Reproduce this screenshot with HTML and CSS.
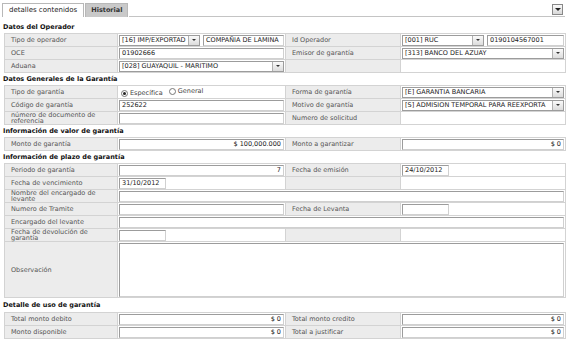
FILE: index.html
```html
<!DOCTYPE html>
<html lang="es">
<head>
  <meta charset="UTF-8" />
  <title>Garantia - detalles contenidos</title>
  <link rel="stylesheet" href="styles.css">
</head>
<body>
  <div class="page">
    <div class="tabbar">
      <a href="#" class="tab active">detalles contenidos</a>
      <a href="#" class="tab">Historial</a>
      <span class="tab-line"></span>
      <button class="collapse" type="button"><span class="arrow"></span></button>
    </div>

    <h3 class="section first">Datos del Operador</h3>
    <table class="grid">
      <colgroup><col class="c1"><col class="c2"><col class="c3"><col class="c4"></colgroup>
      <tr>
        <th>Tipo de operador</th>
        <td>
          <div class="pair">
            <div class="combo w80"><span class="txt">[16] IMP/EXPORTAD</span><span class="btn"></span></div>
            <input class="field" value="COMPAÑIA DE LAMINA">
          </div>
        </td>
        <th>Id Operador</th>
        <td>
          <div class="pair">
            <div class="combo w81"><span class="txt">[001] RUC</span><span class="btn"></span></div>
            <input class="field" value="0190104567001">
          </div>
        </td>
      </tr>
      <tr>
        <th>OCE</th>
        <td><input class="field" value="01902666"></td>
        <th>Emisor de garantía</th>
        <td><div class="combo"><span class="txt">[313] BANCO DEL AZUAY</span><span class="btn"></span></div></td>
      </tr>
      <tr>
        <th>Aduana</th>
        <td><div class="combo"><span class="txt">[028] GUAYAQUIL - MARITIMO</span><span class="btn"></span></div></td>
        <th></th>
        <td></td>
      </tr>
    </table>

    <h3 class="section">Datos Generales de la Garantía</h3>
    <table class="grid">
      <colgroup><col class="c1"><col class="c2"><col class="c3"><col class="c4"></colgroup>
      <tr>
        <th>Tipo de garantía</th>
        <td class="radios">
          <label><input type="radio" name="tipo" checked> Específica</label>
          <label><input type="radio" name="tipo"> General</label>
        </td>
        <th>Forma de garantía</th>
        <td><div class="combo"><span class="txt">[E] GARANTIA BANCARIA</span><span class="btn"></span></div></td>
      </tr>
      <tr>
        <th>Código de garantía</th>
        <td><input class="field" value="252622"></td>
        <th>Motivo de garantía</th>
        <td><div class="combo"><span class="txt">[S] ADMISION TEMPORAL PARA REEXPORTA</span><span class="btn"></span></div></td>
      </tr>
      <tr>
        <th class="two">número de documento de referencia</th>
        <td><input class="field" value=""></td>
        <th>Numero de solicitud</th>
        <td></td>
      </tr>
    </table>

    <h3 class="section">Información de valor de garantía</h3>
    <table class="grid">
      <colgroup><col class="c1"><col class="c2"><col class="c3"><col class="c4"></colgroup>
      <tr>
        <th>Monto de garantía</th>
        <td><input class="field num" value="$ 100,000.000"></td>
        <th>Monto a garantizar</th>
        <td><input class="field num" value="$ 0"></td>
      </tr>
    </table>

    <h3 class="section">Información de plazo de garantía</h3>
    <table class="grid">
      <colgroup><col class="c1"><col class="c2"><col class="c3"><col class="c4"></colgroup>
      <tr>
        <th>Periodo de garantía</th>
        <td><input class="field num" value="7"></td>
        <th>Fecha de emisión</th>
        <td><input class="field date" value="24/10/2012"></td>
      </tr>
      <tr>
        <th>Fecha de vencimiento</th>
        <td><input class="field date" value="31/10/2012"></td>
        <th></th>
        <td></td>
      </tr>
      <tr>
        <th class="two">Nombre del encargado de levante</th>
        <td colspan="3"><input class="field" value=""></td>
      </tr>
      <tr>
        <th>Numero de Tramite</th>
        <td><input class="field" value=""></td>
        <th>Fecha de Levanta</th>
        <td><input class="field date" value=""></td>
      </tr>
      <tr>
        <th>Encargado del levante</th>
        <td colspan="3"><input class="field" value=""></td>
      </tr>
      <tr>
        <th class="two">Fecha de devolución de garantía</th>
        <td><input class="field date" value=""></td>
        <th></th>
        <td></td>
      </tr>
      <tr class="tall">
        <th>Observación</th>
        <td colspan="3"><textarea class="notes"></textarea></td>
      </tr>
    </table>

    <h3 class="section last">Detalle de uso de garantía</h3>
    <table class="grid">
      <colgroup><col class="c1"><col class="c2"><col class="c3"><col class="c4"></colgroup>
      <tr>
        <th>Total monto debito</th>
        <td><input class="field num" value="$ 0"></td>
        <th>Total monto credito</th>
        <td><input class="field num" value="$ 0"></td>
      </tr>
      <tr>
        <th>Monto disponible</th>
        <td><input class="field num" value="$ 0"></td>
        <th>Total a justificar</th>
        <td><input class="field num" value="$ 0"></td>
      </tr>
    </table>
  </div>
</body>
</html>
```

FILE: styles.css
```css
* {
  box-sizing: border-box;
}

body {
  margin: 0;
  background-color: #fff;
  font-family: "DejaVu Sans", Verdana, sans-serif;
  font-size: 6.5px;
  color: #333;
}

.page {
  width: 567px;
  padding: 0 2px 0 3px;
}

/* tabs */
.tabbar {
  display: flex;
  align-items: flex-end;
  height: 17px;
  padding-top: 3px;
  position: relative;
}

.tab {
  display: block;
  height: 14px;
  line-height: 13px;
  padding: 0 5px;
  font-size: 7px;
  text-decoration: none;
  color: #222;
  border: 1px solid #b8b8b8;
  border-bottom: none;
  margin-right: 1px;
}

.tab.active {
  background-color: #fff;
  padding: 0 6px;
  margin-left: -1px;
}

.tab:not(.active) {
  background-color: #c9c9c9;
  font-weight: bold;
  color: #333;
  font-size: 6.5px;
}

.tab-line {
  flex: 1;
  border-bottom: 1px solid #c4c4c4;
}

.collapse {
  position: absolute;
  right: 2px;
  top: 4px;
  width: 11px;
  height: 11px;
  padding: 0;
  border: 1px solid #888;
  background: linear-gradient(#fafafa, #d8d8d8);
  display: flex;
  align-items: center;
  justify-content: center;
}

.collapse .arrow {
  width: 0;
  height: 0;
  border-left: 3px solid transparent;
  border-right: 3px solid transparent;
  border-top: 3px solid #222;
}

/* section headings */
.section {
  margin: 0;
  height: 12px;
  line-height: 12px;
  font-size: 6.5px;
  font-weight: bold;
  color: #111;
}

.section.first {
  height: 16px;
  line-height: 20px;
}

.section.last {
  height: 14px;
  line-height: 14px;
}

/* form tables */
.grid {
  width: 561px;
  margin-left: 1px;
  border-collapse: collapse;
  table-layout: fixed;
}

.c1 { width: 113px; }
.c2 { width: 168px; }
.c3 { width: 115px; }
.c4 { width: 165px; }

.grid tr {
  height: 13px;
}

.grid th,
.grid td {
  border: 1px solid #d3d3d3;
  padding: 0 1px;
  height: 13px;
  vertical-align: middle;
}

.grid th {
  background-color: #ececec;
  font-weight: normal;
  text-align: left;
  padding-left: 6px;
  color: #555;
  white-space: nowrap;
}

.grid th.two {
  white-space: normal;
  line-height: 5.5px;
  padding-right: 20px;
  padding-top: 1px;
}

.grid td {
  background-color: #fff;
}

.grid tr.tall th,
.grid tr.tall td {
  height: 56px;
}

/* inputs */
.field {
  display: block;
  width: 100%;
  height: 11px;
  margin: 0;
  padding: 0 2px;
  font-family: "DejaVu Sans", Verdana, sans-serif;
  font-size: 6.5px;
  color: #222;
  border: 1px solid #9c9c9c;
  border-right-color: #d0d0d0;
  border-bottom-color: #d0d0d0;
  background-color: #fff;
  outline: none;
}

.field.num {
  text-align: right;
}

.field.date {
  width: 47px;
}

.pair {
  display: flex;
  gap: 3px;
}

.pair .field {
  flex: 1;
  min-width: 0;
}

.combo {
  display: flex;
  width: 100%;
  height: 11px;
  border: 1px solid #9c9c9c;
  background-color: #fff;
  color: #222;
}

.combo.w80 { width: 81px; flex: none; }
.combo.w81 { width: 82px; flex: none; }

.combo .txt {
  flex: 1;
  min-width: 0;
  overflow: hidden;
  white-space: nowrap;
  line-height: 9px;
  padding-left: 2px;
}

.combo .btn {
  width: 11px;
  border-left: 1px solid #b0b0b0;
  background: linear-gradient(#fafafa, #dcdcdc);
  display: flex;
  align-items: center;
  justify-content: center;
}

.combo .btn::after {
  content: "";
  border-left: 2px solid transparent;
  border-right: 2px solid transparent;
  border-top: 2px solid #333;
}

/* radios */
.radios label {
  display: inline-flex;
  align-items: center;
  gap: 2px;
  margin-right: 2px;
  color: #444;
}

.radios input {
  appearance: none;
  width: 7px;
  height: 7px;
  margin: 0 0 0 2px;
  border: 1px solid #777;
  border-radius: 50%;
  background-color: #fff;
  display: inline-flex;
  align-items: center;
  justify-content: center;
}

.radios input:checked::after {
  content: "";
  width: 3px;
  height: 3px;
  border-radius: 50%;
  background-color: #222;
}

.notes {
  display: block;
  width: 100%;
  height: 54px;
  margin: 0;
  resize: none;
  border: 1px solid #9c9c9c;
  border-right-color: #d0d0d0;
  border-bottom-color: #d0d0d0;
  font-family: "DejaVu Sans", Verdana, sans-serif;
  font-size: 6.5px;
}
```
